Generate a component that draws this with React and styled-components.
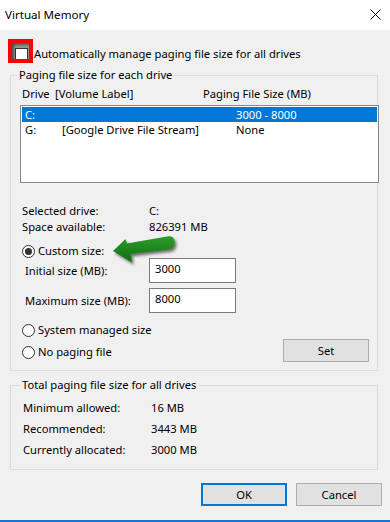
import styled, { createGlobalStyle } from "styled-components";

const GlobalStyle = createGlobalStyle`
  html, body {
    margin: 0;
    padding: 0;
    background: #f0f0f0;
  }
  body {
    font-family: "Noto Sans", "Liberation Sans", sans-serif;
    font-size: 11.2px;
    color: #000;
  }
`;

const drives = [
  { letter: "C:", label: "", size: "3000 - 8000", selected: true },
  { letter: "G:", label: "[Google Drive File Stream]", size: "None" },
];

const totals = [
  ["Minimum allowed:", "16 MB"],
  ["Recommended:", "3443 MB"],
  ["Currently allocated:", "3000 MB"],
];

const arrowPath =
  "M113 252 L125.5 240 L127 244.5 Q150 240.5 167 237.5 Q174.5 236.5 174.5 243 Q174.5 249.5 168 250.5 Q150 252.5 130.5 255 L132 263.5 Z";

const App = () => {
  return (
    <Window>
      <GlobalStyle />
      <TitleBar>
        <Title>Virtual Memory</Title>
        <CloseIcon width="11" height="11" viewBox="0 0 11 11">
          <path d="M0.5 0.5 L10.5 10.5 M10.5 0.5 L0.5 10.5" stroke="#000" strokeWidth="1" />
        </CloseIcon>
      </TitleBar>

      <Content>
        <AutoRow>
          <RedFrame>
            <Checkbox />
          </RedFrame>
          <span>Automatically manage paging file size for all drives</span>
        </AutoRow>

        <GroupBox>
          <Legend>Paging file size for each drive</Legend>
          <ListHeader>
            <span>Drive</span>
            <span>[Volume Label]</span>
            <span>Paging File Size (MB)</span>
          </ListHeader>
          <ListBox>
            {drives.map((d) => (
              <DriveRow key={d.letter} $selected={d.selected}>
                <span>{d.letter}</span>
                <span>{d.label}</span>
                <span>{d.size}</span>
              </DriveRow>
            ))}
          </ListBox>

          <InfoGrid>
            <span>Selected drive:</span>
            <span>C:</span>
            <span>Space available:</span>
            <span>826391 MB</span>
          </InfoGrid>

          <RadioRow $top={9}>
            <Radio $checked />
            <span>Custom size:</span>
            <Arrow width="72" height="34" viewBox="108 234 72 34">
              <defs>
                <filter id="arrowShadow" x="-20%" y="-40%" width="140%" height="180%">
                  <feGaussianBlur stdDeviation="1.4" />
                </filter>
                <linearGradient id="arrowFill" x1="0" y1="0" x2="0" y2="1">
                  <stop offset="0" stopColor="#2c9c2c" />
                  <stop offset="1" stopColor="#0f6e0e" />
                </linearGradient>
              </defs>
              <path
                d={arrowPath}
                fill="rgba(0,0,0,0.55)"
                transform="translate(2 2.5)"
                filter="url(#arrowShadow)"
              />
              <path d={arrowPath} fill="url(#arrowFill)" />
            </Arrow>
          </RadioRow>

          <SizeRow>
            <SizeLabel>Initial size (MB):</SizeLabel>
            <SizeInput defaultValue="3000" />
          </SizeRow>
          <SizeRow $top={5}>
            <SizeLabel>Maximum size (MB):</SizeLabel>
            <SizeInput defaultValue="8000" />
          </SizeRow>

          <ChoiceArea>
            <ChoiceColumn>
              <RadioRow>
                <Radio />
                <span>System managed size</span>
              </RadioRow>
              <RadioRow>
                <Radio />
                <span>No paging file</span>
              </RadioRow>
            </ChoiceColumn>
            <SetButton>Set</SetButton>
          </ChoiceArea>
        </GroupBox>

        <TotalsBox>
          <Legend>Total paging file size for all drives</Legend>
          {totals.map(([label, value]) => (
            <TotalRow key={label}>
              <span>{label}</span>
              <span>{value}</span>
            </TotalRow>
          ))}
        </TotalsBox>

        <ButtonBar>
          <DialogButton $default>OK</DialogButton>
          <DialogButton>Cancel</DialogButton>
        </ButtonBar>
      </Content>
    </Window>
  );
};

export default App;

const Window = styled.div`
  width: 390px;
  height: 522px;
  box-sizing: border-box;
  background: #f0f0f0;
  border-bottom: 2px solid #1b76c8;
  display: flex;
  flex-direction: column;
  overflow: hidden;
`;

const TitleBar = styled.div`
  height: 30px;
  flex: none;
  background: #ffffff;
  display: flex;
  align-items: center;
  justify-content: space-between;
  padding: 0 9px 0 5px;
`;

const Title = styled.span`
  font-size: 11.6px;
  line-height: 16px;
`;

const CloseIcon = styled.svg`
  display: block;
  margin-top: -1px;
`;

const Content = styled.div`
  padding: 0 12px 0 10px;
  display: flex;
  flex-direction: column;
`;

const AutoRow = styled.div`
  margin-top: 9px;
  margin-left: -2px;
  height: 24px;
  display: flex;
  align-items: center;
  line-height: 16px;
  span {
    margin-top: 6px;
    margin-left: 1px;
  }
`;

const RedFrame = styled.div`
  width: 17px;
  height: 16px;
  border: 4px solid #ff0000;
  overflow: hidden;
  background: #9a9a9a;
  box-shadow: inset 2px 2px 3px rgba(0, 0, 0, 0.5);
`;

const Checkbox = styled.div`
  width: 13px;
  height: 13px;
  box-sizing: border-box;
  margin: 5px 0 0 3px;
  background: #ffffff;
  border: 1px solid #333333;
`;

const GroupBox = styled.fieldset`
  margin: 4px 0 0;
  padding: 3px 0 8px 9px;
  border: 1px solid #dcdcdc;
  min-width: 0;
`;

const TotalsBox = styled(GroupBox)`
  margin-top: 6px;
  padding: 4px 0 9px 12px;
`;

const Legend = styled.legend`
  padding: 0 2px;
  margin-left: -3px;
  line-height: 16px;
`;

const ListHeader = styled.div`
  display: grid;
  grid-template-columns: 33px 148px auto;
  padding-left: 2px;
  line-height: 16px;
`;

const ListBox = styled.div`
  margin: 3px -2px 0 0;
  height: 78px;
  box-sizing: border-box;
  border: 1px solid #828790;
  background: #ffffff;
  padding: 1px;
`;

const DriveRow = styled.div`
  display: grid;
  grid-template-columns: 37px 174px auto;
  height: 15px;
  line-height: 15px;
  padding-left: 3px;
  background: ${(p) => (p.$selected ? "#0078d7" : "transparent")};
  color: ${(p) => (p.$selected ? "#ffffff" : "#000000")};
`;

const InfoGrid = styled.div`
  margin-top: 20px;
  padding-left: 2px;
  display: grid;
  grid-template-columns: 127px auto;
  line-height: 16px;
`;

const RadioRow = styled.div`
  position: relative;
  margin-top: ${(p) => p.$top || 0}px;
  margin-left: 2px;
  height: 14px;
  display: flex;
  align-items: center;
  gap: 3px;
  line-height: 16px;
`;

const Radio = styled.span`
  position: relative;
  width: 13px;
  height: 13px;
  box-sizing: border-box;
  border-radius: 50%;
  border: 1px solid #333333;
  background: #ffffff;
  flex: none;
  &::after {
    content: "";
    display: ${(p) => (p.$checked ? "block" : "none")};
    position: absolute;
    left: 2px;
    top: 2px;
    width: 7px;
    height: 7px;
    border-radius: 50%;
    background: #333333;
  }
`;

const Arrow = styled.svg`
  position: absolute;
  left: 86px;
  top: -11px;
  overflow: visible;
`;

const SizeRow = styled.div`
  margin-top: ${(p) => p.$top || 0}px;
  padding-left: 5px;
  height: 25px;
  display: flex;
  align-items: center;
`;

const SizeLabel = styled.span`
  width: 124px;
  line-height: 16px;
`;

const SizeInput = styled.input`
  width: 87px;
  height: 25px;
  box-sizing: border-box;
  margin: 0;
  padding: 1px 5px 6px;
  border: 1px solid #7a7a7a;
  background: #ffffff;
  font: inherit;
  line-height: 16px;
  color: #000;
  outline: none;
`;

const ChoiceArea = styled.div`
  margin-top: 10px;
  display: flex;
  justify-content: space-between;
`;

const ChoiceColumn = styled.div`
  display: flex;
  flex-direction: column;
  gap: 8px;
  padding-bottom: 3px;
`;

const SetButton = styled.button`
  align-self: flex-end;
  margin-right: 8px;
  width: 86px;
  height: 23px;
  padding: 0;
  font: inherit;
  color: #000;
  background: #e1e1e1;
  border: 1px solid #adadad;
`;

const TotalRow = styled.div`
  display: grid;
  grid-template-columns: 128px auto;
  line-height: 21px;
`;

const ButtonBar = styled.div`
  margin: 13px -4px 0 0;
  display: flex;
  justify-content: flex-end;
  gap: 9px;
`;

const DialogButton = styled.button`
  width: 86px;
  height: 23px;
  padding: 0;
  font: inherit;
  color: #000;
  background: #e1e1e1;
  border: ${(p) => (p.$default ? "2px solid #0078d7" : "1px solid #adadad")};
`;
